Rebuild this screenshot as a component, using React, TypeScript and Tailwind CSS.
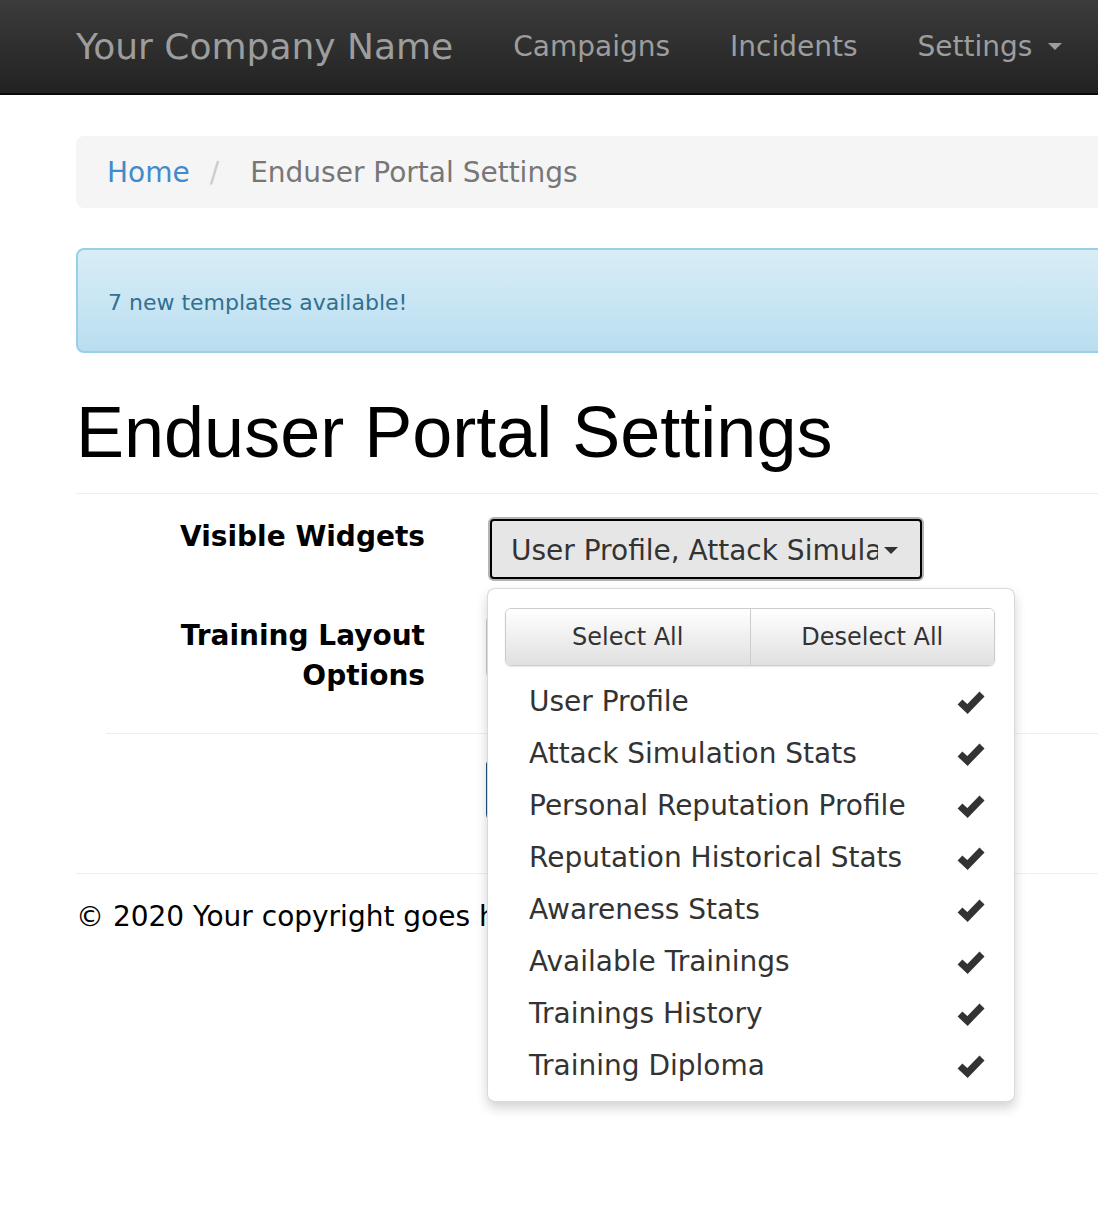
import React from "react";

const widgets = [
  "User Profile",
  "Attack Simulation Stats",
  "Personal Reputation Profile",
  "Reputation Historical Stats",
  "Awareness Stats",
  "Available Trainings",
  "Trainings History",
  "Training Diploma",
];

const Check = () => (
  <svg width="28" height="24" viewBox="0 0 28 24" className="shrink-0">
    <polyline points="3,12 10.5,19 25,4" fill="none" stroke="#333" strokeWidth="7" strokeLinejoin="miter" />
  </svg>
);

const Navbar = () => (
  <nav className="flex h-[95px] items-center border-b-2 border-[#0b0b0b] bg-gradient-to-b from-[#3c3c3c] to-[#222]">
    <span className="pl-[76px] pr-[30px] text-[36px] leading-[48px] text-[#9d9d9d]">Your Company Name</span>
    {["Campaigns", "Incidents"].map((l) => (
      <span key={l} className="px-[30px] text-[28px] leading-[40px] text-[#9d9d9d]">
        {l}
      </span>
    ))}
    <span className="flex items-center px-[30px] text-[28px] leading-[40px] text-[#9d9d9d]">
      Settings
      <span className="ml-[16px] h-0 w-0 border-x-[7px] border-t-[7px] border-x-transparent border-t-[#9d9d9d]" />
    </span>
  </nav>
);

const WidgetMenu = () => (
  <div className="absolute left-[1px] top-[94px] z-10 w-[528px] rounded-lg border border-black/15 bg-white pb-[9px] pt-[19px] shadow-[0_6px_12px_rgba(0,0,0,0.175)]">
    <div className="ml-[17px] flex h-[58px] w-[490px] overflow-hidden rounded-md border border-[#ccc] shadow-[0_1px_2px_rgba(0,0,0,0.1)]">
      <button className="flex-1 bg-gradient-to-b from-white to-[#e0e0e0] text-[24px] text-[#333]">Select All</button>
      <button className="flex-1 border-l border-[#ccc] bg-gradient-to-b from-white to-[#e0e0e0] text-[24px] text-[#333]">
        Deselect All
      </button>
    </div>
    <ul className="mt-[10px]">
      {widgets.map((w) => (
        <li key={w} className="flex items-center justify-between py-[6px] pl-[41px] pr-[29px] text-[28px] leading-[40px] text-[#333]">
          <span>{w}</span>
          <Check />
        </li>
      ))}
    </ul>
  </div>
);

export default function App() {
  return (
    <div className="min-h-[1210px] w-full overflow-hidden bg-white font-['DejaVu_Sans',Verdana,sans-serif]">
      <Navbar />
      <div className="w-[1200px] pl-[76px]">
        <div className="mt-[41px] flex h-[72px] items-center rounded-lg bg-[#f5f5f5] pl-[31px] pt-[2px] text-[28px] leading-[40px]">
          <span className="text-[#428bca]">Home</span>
          <span className="ml-[20px] text-[#ccc]">/</span>
          <span className="ml-[31px] text-[#777]">Enduser Portal Settings</span>
        </div>

        <div className="mt-[40px] h-[105px] rounded-lg border-2 border-[#9acfea] bg-gradient-to-b from-[#d9edf7] to-[#b9def0] pl-[30px] pt-[37px] text-[22px] leading-[32px] text-[#31708f]">
          7 new templates available!
        </div>

        <h1 className="mt-[43px] font-['Liberation_Sans',Arial,sans-serif] text-[72px] leading-[72px] text-black">
          Enduser Portal Settings
        </h1>
        <hr className="mt-[25px] border-t border-[#eee]" />

        <div className="flex items-start">
          <label className="w-[349px] pt-[23px] text-right text-[28px] font-bold leading-[40px] text-black">Visible Widgets</label>
          <div className="relative ml-[61px]">
            <button className="ml-[4px] mt-[25px] flex h-[60px] w-[432px] items-center rounded-[4px] border-2 border-black bg-[#e6e6e6] pl-[19px] pr-[22px] pt-[3px] text-[28px] text-[#333] shadow-[0_0_0_2px_#b4b4b4]">
              <span className="flex-1 overflow-hidden whitespace-nowrap text-left">User Profile, Attack Simulation Stats</span>
              <span className="ml-[6px] h-0 w-0 border-x-[7px] border-t-[7px] border-x-transparent border-t-[#333]" />
            </button>
            <WidgetMenu />
          </div>
        </div>

        <div className="mt-[35px] flex items-start">
          <label className="w-[349px] pt-[2px] text-right text-[28px] font-bold leading-[40px] text-black">
            Training Layout
            <br />
            Options
          </label>
          <div className="ml-[61px] h-[66px] w-[400px] rounded-lg border-2 border-[#ccc] bg-white" />
        </div>

        <hr className="ml-[30px] mt-[37px] border-t border-[#eee]" />
        <div className="ml-[410px] mt-[23px] h-[65px] w-[200px] rounded-lg border-2 border-[#204d74] bg-[#286090]" />

        <hr className="mt-[51px] border-t border-[#eee]" />
        <p className="mt-[23px] text-[28px] leading-[40px] text-black">© 2020 Your copyright goes here</p>
      </div>
    </div>
  );
}
